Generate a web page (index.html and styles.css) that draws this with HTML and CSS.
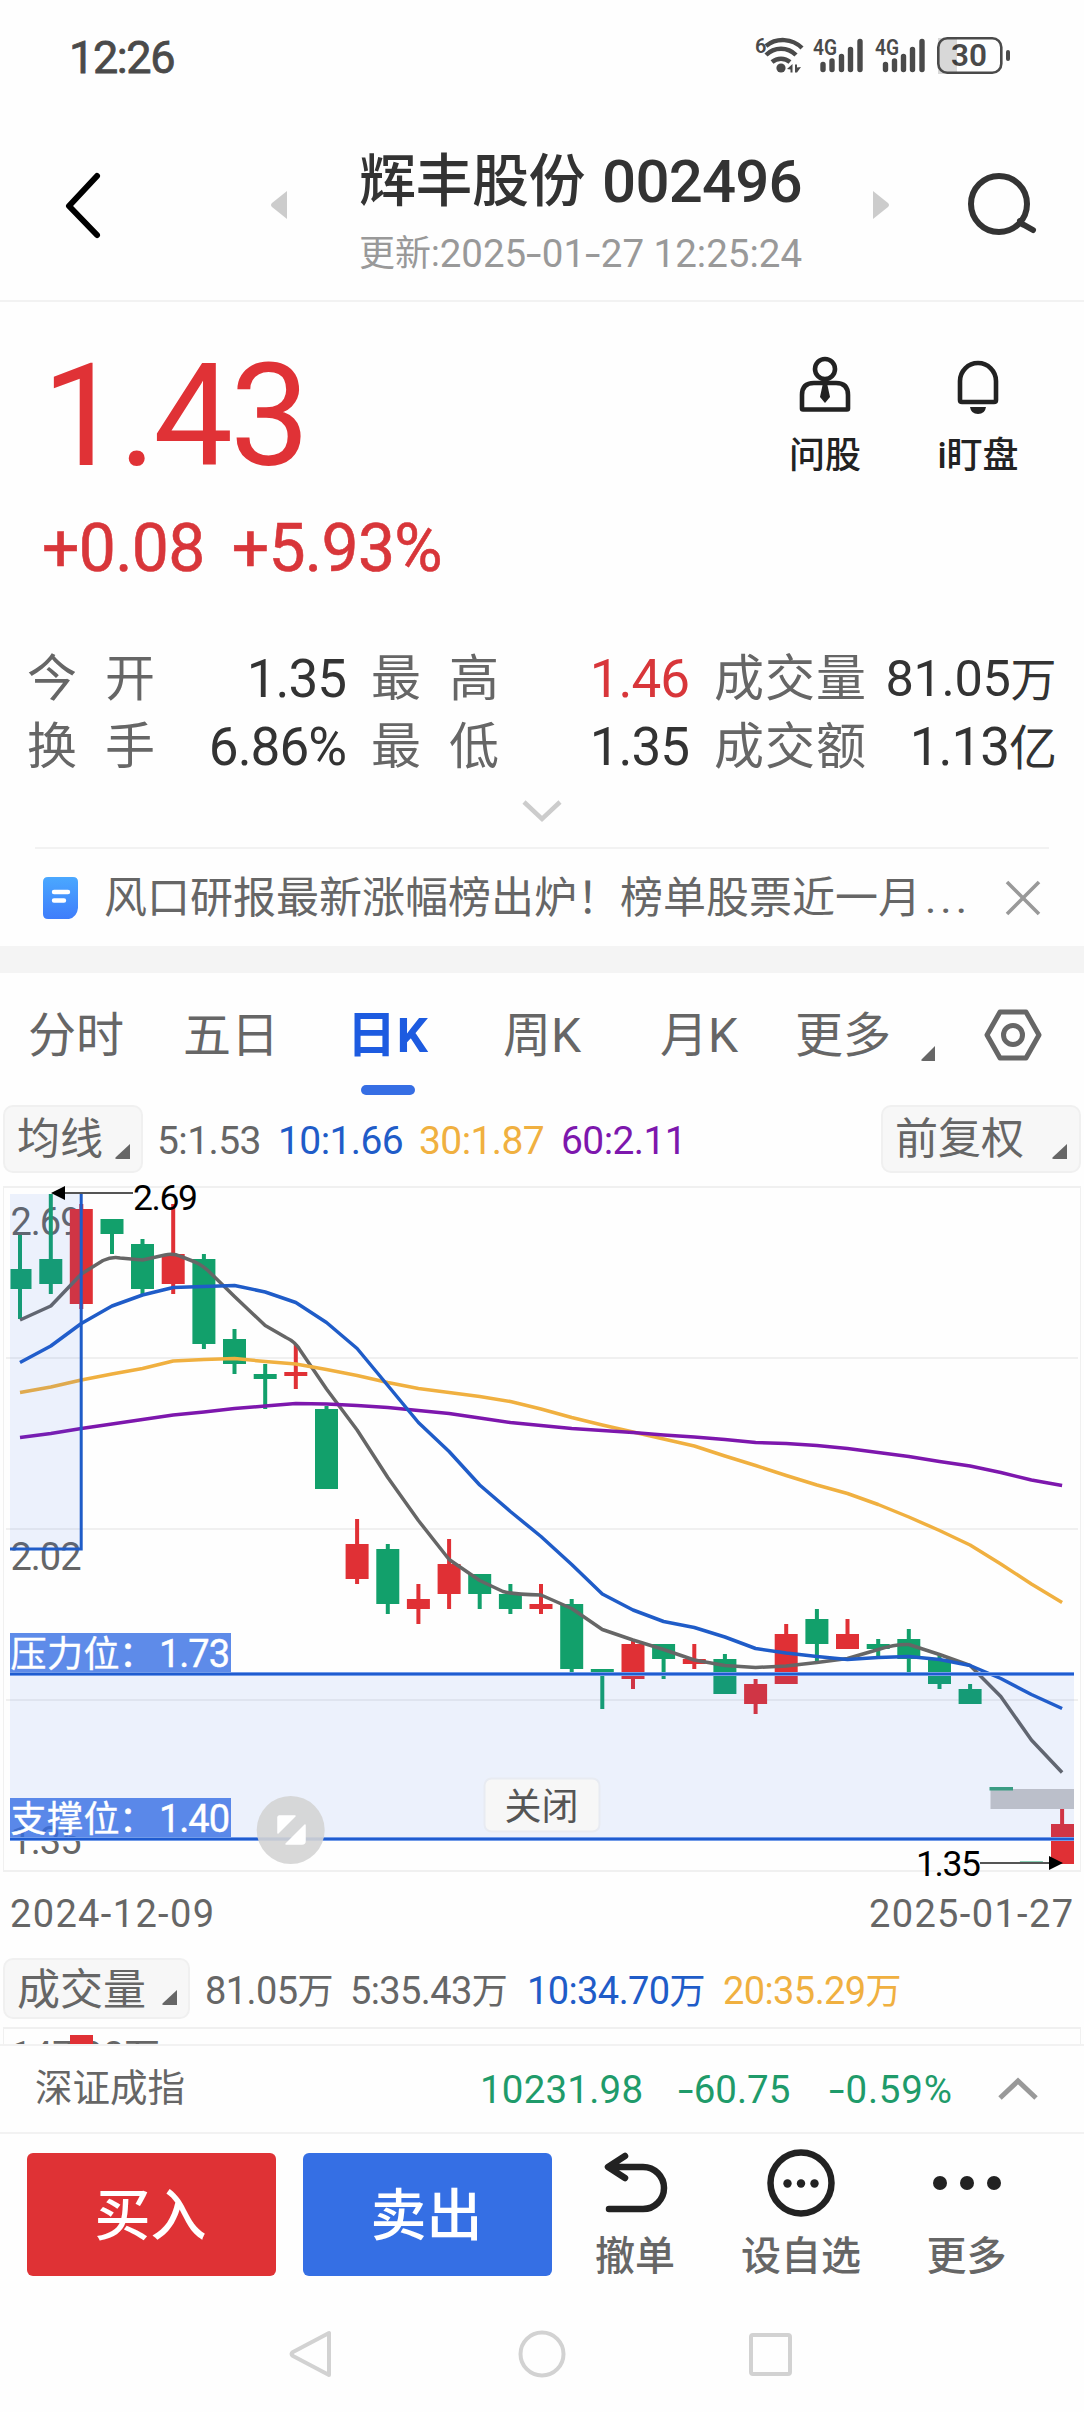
FILE: index.html
```html
<!DOCTYPE html>
<html lang="zh-CN">
<head>
<meta charset="utf-8">
<title>辉丰股份 002496</title>
<link rel="stylesheet" href="styles.css">
</head>
<body>
<div class="status">
  <span class="clock">12:26</span>
  <svg class="status-icons" width="280" height="70" viewBox="0 0 280 70">
    <g fill="none" stroke="#4a4a4a" stroke-width="4.4">
      <path d="M22 26a27 27 0 0 1 36 2M22 35a21 21 0 0 1 30 0M28 42a14 14 0 0 1 18 0"/>
    </g>
    <g fill="#4a4a4a">
      <circle cx="37" cy="48" r="4.6"/>
      <path d="M48.500 44v8.500h-2v-3l-3.500-.5zM51 44.500h2v3l4-.5-4 5.500h-2z"/>
      <text x="11" y="33" font-size="20" font-weight="600">6</text>
      <text x="69" y="35" font-size="22" font-weight="600" textLength="24" lengthAdjust="spacingAndGlyphs">4G</text>
      <text x="131" y="35" font-size="22" font-weight="600" textLength="24" lengthAdjust="spacingAndGlyphs">4G</text>
      <text x="207" y="46" font-size="31" font-weight="600" textLength="36" lengthAdjust="spacingAndGlyphs">30</text>
    </g>
    <path d="M194 18h19v36h-19z" fill="#000" opacity=".15"/>
    <g stroke="#4a4a4a" stroke-width="5.400" stroke-linecap="round">
      <path d="M79 44.500v5M88 41v8.500M97.500 36.500v13M106.500 29.500v20M116 21.500v28"/>
      <path d="M141.500 44.500v5M150.500 41v8.500M159.500 36.500v13M168.500 29.500v20M178 21.500v28"/>
    </g>
    <rect x="194.300" y="18.300" width="63" height="34.400" rx="9" fill="none" stroke="#4a4a4a" stroke-width="2.600"/>
    <rect x="262" y="30" width="4" height="11" rx="2" fill="#4a4a4a"/>
  </svg>
</div>

<header class="header">
  <svg class="back" width="40" height="70" viewBox="0 0 40 70"><path d="M35 5L7 35l28 29" fill="none" stroke="#000" stroke-width="6" stroke-linecap="round" stroke-linejoin="round"/></svg>
  <svg class="prev" width="16" height="28" viewBox="0 0 16 28"><path d="M16 0v28L1 16q-2-2 0-4z" fill="#ccc"/></svg>
  <div class="title-box">
    <h1 class="title">辉丰股份<span class="code">002496</span></h1>
    <div class="updated">更新:<span class="updated-time">2025<b class="dash">-</b>01<b class="dash">-</b>27 12:25:24</span></div>
  </div>
  <svg class="next" width="16" height="28" viewBox="0 0 16 28"><path d="M0 0v28l15-12q2-2 0-4z" fill="#ccc"/></svg>
  <svg class="search" width="72" height="66" viewBox="0 0 72 66"><circle cx="32" cy="33" r="28" fill="none" stroke="#333" stroke-width="6"/><path d="M53 50q2 4 4 4l9 5" fill="none" stroke="#333" stroke-width="6" stroke-linecap="round"/></svg>
</header>

<section class="quote">
  <div class="price-box">
    <div class="price">1.43</div>
    <div class="change"><span>+0.08</span><span>+5.93%</span></div>
  </div>
  <div class="tool ask">
    <svg width="56" height="60" viewBox="0 0 56 60" fill="none" stroke="#222" stroke-width="4.600">
      <circle cx="28" cy="14" r="10"/>
      <path d="M5 53.500V40q0-12 12-12h22q12 0 12 12v13.500q0 1-1 1H6q-1 0-1-1z" stroke-linejoin="round"/>
      <path d="M26 28h4l3 14-5 6-5-6z" fill="#222" stroke="none"/>
    </svg>
    <span>问股</span>
  </div>
  <div class="tool watch">
    <svg width="56" height="60" viewBox="0 0 56 60" fill="none" stroke="#222" stroke-width="4.600">
      <path d="M10 45V26a18 18 0 0 1 36 0v19q0 2-2 2H12q-2 0-2-2z"/>
      <path d="M20 52h16q-1 7-8 7t-8-7z" fill="#222" stroke="none"/>
    </svg>
    <span>i盯盘</span>
  </div>
</section>

<section class="stats">
  <span class="k"><i>今</i><i>开</i></span><span class="v">1.35</span>
  <span class="k"><i>最</i><i>高</i></span><span class="v up">1.46</span>
  <span class="k"><i>成</i><i>交</i><i>量</i></span><span class="v small">81.05<b>万</b></span>
  <span class="k"><i>换</i><i>手</i></span><span class="v">6.86%</span>
  <span class="k"><i>最</i><i>低</i></span><span class="v">1.35</span>
  <span class="k"><i>成</i><i>交</i><i>额</i></span><span class="v">1.13<b>亿</b></span>
</section>
<svg class="expand" width="44" height="28" viewBox="0 0 44 28"><path d="M4 4l18 17L40 4" fill="none" stroke="#ccc" stroke-width="4.500"/></svg>

<section class="notice">
  <svg width="35" height="42" viewBox="0 0 35 42">
    <defs><linearGradient id="doc" x1="0" y1="0" x2="0" y2="1"><stop offset="0" stop-color="#4aa8ff"/><stop offset="1" stop-color="#3f7dfb"/></linearGradient></defs>
    <path d="M5 0h25q5 0 5 5v26q-1 9-9 11H5q-5 0-5-5V5q0-5 5-5z" fill="url(#doc)"/>
    <path d="M11 15h14M11 23.500h10" stroke="#fff" stroke-width="4.400" stroke-linecap="round"/>
  </svg>
  <span class="notice-text">风口研报最新涨幅榜出炉！榜单股票近一月<b class="more">...</b></span>
  <svg class="close" width="36" height="36" viewBox="0 0 36 36"><path d="M2 2l32 32M34 2L2 34" stroke="#999" stroke-width="3.600"/></svg>
</section>
<div class="band"></div>

<nav class="tabs">
  <span class="tab t1">分时</span>
  <span class="tab t2">五日</span>
  <span class="tab t3 active">日K</span>
  <span class="tab t4">周K</span>
  <span class="tab t5">月K</span>
  <span class="tab t6">更多</span>
  <svg class="tri tab-tri" width="15" height="15" viewBox="0 0 15 15"><path d="M14 0v15H2q-3 0-1-2z"/></svg>
  <svg class="gear" width="60" height="56" viewBox="0 0 60 56" fill="none" stroke="#666" stroke-width="5" stroke-linejoin="round"><path d="M17 5h26l13 23-13 23H17L4 28z"/><circle cx="30" cy="28" r="9.500"/></svg>
</nav>

<div class="legend">
  <span class="pill ma">均线<svg class="tri" width="15" height="15" viewBox="0 0 15 15"><path d="M15 0v15H2q-3 0-1-2z"/></svg></span>
  <span class="val w1">5:1.53</span><span class="val w2 blue">10:1.66</span><span class="val w3 gold">30:1.87</span><span class="val purple">60:2.11</span>
  <span class="pill adj">前复权<svg class="tri" width="15" height="15" viewBox="0 0 15 15"><path d="M15 0v15H2q-3 0-1-2z"/></svg></span>
</div>

<div class="chart">
<svg width="1084" height="770" viewBox="0 1180 1084 770">
  <g stroke="#f0f0f0" stroke-width="2" fill="none">
    <path d="M3 1187H1081M6 1358H1078M6 1529H1078M6 1700H1078M3 1871H1081"/>
    <path d="M3.500 1187V1871M1080.500 1187V1871" stroke-width="1"/>
  </g>
  <g fill="#666" font-size="38">
    <text x="10.500" y="1235" textLength="71">2.69</text>
    <text x="10.500" y="1570" textLength="71">2.02</text>
    <text x="10.500" y="1854" textLength="71">1.35</text>
  </g>
  <g fill="none">
    <g stroke="#12a06b">
      <path stroke-width="4" d="M20 1235V1319M50.800 1194V1294M112 1219V1254M142.500 1239V1295M203.900 1254V1349M234.500 1329V1374M265.200 1364V1409M326.500 1406V1489M387.800 1544V1614M479.700 1574V1609M510.400 1584V1614M571.700 1599V1674M602.300 1669V1709M663.600 1644V1679M724.900 1654V1694M816.900 1609V1662M878.200 1639V1657M908.800 1629V1674M939.500 1654V1689M970.100 1684V1704"/>
      <path stroke-width="23" d="M50.800 1259V1284M112 1219V1234M142.500 1244V1289M203.900 1259V1344M234.500 1339V1364M265.200 1374V1379M326.500 1409V1489M387.800 1549V1604M479.700 1574V1594M510.400 1594V1609M571.700 1604V1669M602.300 1669V1674M663.600 1644V1659M724.900 1659V1694M816.900 1619V1644M878.200 1644V1649M908.800 1639V1659M939.500 1659V1684M970.100 1689V1704M1031.400 1861.500V1864"/>
      <path stroke-width="21" d="M21 1269V1289"/>
    </g>
    <g stroke="#e03035">
      <path stroke-width="4" d="M81.300 1204V1309M173.200 1204V1294M295.800 1344V1389M357.100 1519V1584M418.400 1584V1624M449.100 1539V1609M541 1584V1614M633 1640V1689M694.300 1644V1669M755.600 1679V1714M786.200 1624V1684M847.500 1619V1649M1062.100 1809V1864"/>
      <path stroke-width="23" d="M81.300 1209V1304M173.200 1254V1284M295.800 1372V1376M357.100 1544V1579M418.400 1599V1609M449.100 1564V1594M541 1604V1609M633 1644V1679M694.300 1659V1664M755.600 1684V1704M786.200 1634V1684M847.500 1634V1649M1062.500 1824V1864"/>
    </g>
  </g>
  <g fill="none" stroke-width="3.500" stroke-linejoin="round">
    <path stroke="#666" d="M20 1320L50.800 1306 81.300 1274 103 1260.500Q112 1256.500 120 1258L142.500 1260 165 1255Q173.200 1253 181 1256.500L195 1262Q203.900 1266 211 1273.500L234.500 1296.500 265.200 1325.500 286 1337.500Q296 1342 301 1351.500L326.500 1389 357.100 1430 387.800 1477.500 418.400 1520.500 449.100 1559.500 479.700 1580.500 503 1591.500Q510.400 1594 541 1595L571.700 1608.500 602.300 1629.500 633 1640 663.600 1649.500 694.300 1660 724.900 1665.500 755.600 1667.500 786.200 1666 816.900 1662.500 847.500 1658.500 878.200 1649.500Q895 1644 908.800 1644.500L939.500 1654.500 970.100 1665.500 1000.800 1696.500 1031.400 1740 1062.100 1772.500"/>
    <path stroke="#f0b040" d="M20 1392.500L50.800 1387 81.300 1380 112 1374 142.500 1368.500 173.200 1361 203.900 1359.500 234.500 1358.500 265.200 1361.500 295.800 1364 326.500 1369.500 357.100 1375.500 387.800 1382.500 418.400 1388.500 449.100 1392.500 479.700 1396.500 510.400 1401.500 541 1409 571.700 1417.500 602.300 1425 633 1432 663.600 1439 694.300 1446 724.900 1456 755.600 1465.500 786.200 1475.500 816.900 1485 847.500 1493.500 878.200 1504.500 908.800 1517 939.500 1530.500 970.100 1545 1000.800 1564 1031.400 1584 1062.100 1602.500"/>
    <path stroke="#7d17ad" d="M20 1437.500L50.800 1433.500 81.300 1428.500 112 1424 142.500 1419.500 173.200 1415 203.900 1412 234.500 1408.500 265.200 1406 295.800 1403.500 326.500 1404 357.100 1405.500 387.800 1407.500 418.400 1410.500 449.100 1413.500 479.700 1418 510.400 1422.500 541 1425.500 571.700 1428.500 602.300 1430.500 633 1432.500 663.600 1435 694.300 1437 724.900 1439.500 755.600 1442.500 786.200 1443.500 816.900 1445.500 847.500 1448.500 878.200 1452.500 908.800 1456.500 939.500 1461.500 970.100 1466 1000.800 1472.500 1031.400 1480 1062.100 1485.500"/>
    <path stroke="#1f5cc8" d="M20 1362.500L50.800 1346 81.300 1323.500 112 1306 142.500 1295 173.200 1287.500 203.900 1286.500 234.500 1285.500 265.200 1292 295.800 1302.500 326.500 1322.500 357.100 1348.500 387.800 1385.500 418.400 1422.500 449.100 1451.500 479.700 1485 510.400 1511.500 541 1536.500 571.700 1564.500 602.300 1594 633 1610 663.600 1621.500 694.300 1627.500 724.900 1637 755.600 1648.500 786.200 1653 816.900 1656.500 847.500 1659.500 878.200 1657.500 908.800 1656.500 939.500 1659.500 970.100 1665.500 1000.800 1678.500 1031.400 1694.500 1062.100 1708.500"/>
  </g>
  <path d="M10 1194H81V1549H10zM10 1674H1074V1838H10z" fill="#366ee4" opacity=".09"/>
  <path d="M990.500 1789H1074V1809H990.500z" fill="#bbbfca"/>
  <path d="M989.500 1787H1013V1790.500H989.500z" fill="#3a9c83"/>
  <path d="M81.200 1194V1549H10" fill="none" stroke="#1f5cc8" stroke-width="3"/>
  <g fill="#366ee4" opacity=".8"><path d="M10 1633H231V1673H10zM10 1798H231V1838H10z"/></g>
  <path d="M10 1674H1074M10 1839H1074" stroke="#8fb0f0" stroke-width="4"/>
  <path d="M10 1674H1074M10 1839H1074" stroke="#1f5cd0" stroke-width="2.400"/>
  <g fill="#fff" font-size="36" stroke="#fff" stroke-width=".4">
    <text x="10.500" y="1667" textLength="109">压力位</text><text x="119" y="1667">：</text><text x="159" y="1667" font-size="38" textLength="71">1.73</text>
    <text x="10.500" y="1832" textLength="109">支撑位</text><text x="119" y="1832">：</text><text x="159" y="1832" font-size="38" textLength="71">1.40</text>
  </g>
  <g fill="#000" font-size="35.500">
    <text x="133" y="1210" textLength="65">2.69</text>
    <text x="916" y="1876" textLength="65">1.35</text>
    <path d="M62 1193H133M980 1863H1050" stroke="#555" stroke-width="2"/>
    <path d="M51 1193l14-7v14zM1063 1863l-14-7v14z"/>
  </g>
  <g fill="#666" font-size="38">
    <text x="10" y="1927" textLength="204">2024-12-09</text>
    <text x="869" y="1927" textLength="204">2025-01-27</text>
  </g>
  <circle cx="290.700" cy="1830" r="34" fill="#d4d4d4" opacity=".9"/>
  <path d="M279 1816h16l-17 17v-16zM305 1825v16q0 3-3 3h-16z" fill="#fff" stroke="#fff" stroke-width="1.500" stroke-linejoin="round"/>
  <rect x="484.500" y="1778.500" width="115" height="53" rx="7" fill="#f7f7f7" stroke="#e8ebf2" stroke-width="2"/>
  <text x="541.500" y="1820" text-anchor="middle" font-size="37" fill="#555">关闭</text>
</svg>
</div>

<div class="legend volume">
  <span class="pill vol">成交量<svg class="tri" width="15" height="15" viewBox="0 0 15 15"><path d="M15 0v15H2q-3 0-1-2z"/></svg></span>
  <span class="val v1">81.05<b>万</b></span><span class="val v2">5:35.43<b>万</b></span><span class="val v3 blue">10:34.70<b>万</b></span><span class="val gold">20:35.29<b>万</b></span>
</div>
<svg class="vol-chart" width="1084" height="17" viewBox="0 2027 1084 17">
  <path d="M3 2028H1081" stroke="#f0f0f0" stroke-width="2"/>
  <path d="M3.500 2028V2045M1080.500 2028V2045" stroke="#f0f0f0"/>
  <text x="11" y="2067" font-size="37" fill="#666" textLength="113">147.98</text>
  <text x="124" y="2069" font-size="36" fill="#666">万</text>
  <path d="M70 2035H93V2045H70z" fill="#e03035"/>
</svg>

<section class="index-bar">
  <span class="index-name">深证成指</span>
  <span class="n1">10231.98</span><span class="n2"><b class="dash">-</b>60.75</span><span class="n3"><b class="dash">-</b>0.59%</span>
  <svg width="40" height="24" viewBox="0 0 40 24"><path d="M2 21L20 4l18 17" fill="none" stroke="#999" stroke-width="5"/></svg>
</section>

<section class="actions">
  <button class="btn buy">买入</button>
  <button class="btn sell">卖出</button>
  <div class="act a1">
    <svg width="68" height="68" viewBox="0 0 68 68" fill="none" stroke="#222" stroke-width="6.500" stroke-linecap="round" stroke-linejoin="round"><path d="M24 7L7 18l17 11M8 18h34a20.500 20.500 0 0 1 0 42H8"/></svg>
    <span>撤单</span>
  </div>
  <div class="act a2">
    <svg width="68" height="68" viewBox="0 0 68 68"><circle cx="34" cy="34" r="30.500" fill="none" stroke="#222" stroke-width="6.500"/><g fill="#222"><circle cx="20.500" cy="34.500" r="4.200"/><circle cx="34" cy="34.500" r="4.200"/><circle cx="47.500" cy="34.500" r="4.200"/></g></svg>
    <span>设自选</span>
  </div>
  <div class="act a3">
    <svg width="70" height="68" viewBox="0 0 70 68" fill="#222"><circle cx="8" cy="34" r="7"/><circle cx="35" cy="34" r="7"/><circle cx="62" cy="34" r="7"/></svg>
    <span>更多</span>
  </div>
</section>

<footer class="navbar">
  <svg width="1084" height="60" viewBox="0 0 1084 60" fill="none" stroke="#d2d2d2" stroke-width="4" stroke-linejoin="round"><path d="M329 9v42L293 32q-3-2 0-4z"/><circle cx="542" cy="30" r="21.500"/><rect x="751" y="11" width="39" height="39" rx="2"/></svg>
</footer>
</body>
</html>
```

FILE: styles.css
```css
* { box-sizing: border-box; }
body {
  margin: 0;
  width: 1084px;
  background: #fefefe;
  color: #666;
  font-family: Roboto, "Noto Sans CJK SC", sans-serif;
}
svg { display: block; flex: none; }
i, b { font-style: normal; font-weight: inherit; }
span { white-space: nowrap; }
.dash { display: inline-block; margin-right: 5px; transform: scaleX(1.45); transform-origin: left; }

.status { display: flex; height: 100px; padding: 20px 60px 0 69px; justify-content: space-between; color: #4a4a4a; }
.clock { font-size: 45px; line-height: 76px; letter-spacing: -1.4px; -webkit-text-stroke: .8px; }

.header { display: flex; height: 202px; border-bottom: 2px solid #f2f2f2; }
.back { margin: 71px 0 0 62px; }
.prev { margin: 91px 0 0 169px; }
.title-box { width: 445px; margin: 46px 0 0 71px; }
.title { display: flex; justify-content: center; margin: 0; font-size: 57px; line-height: 72px; font-weight: 500; color: #333; letter-spacing: -.5px; }
.code { margin-left: 17px; font-size: 60px; letter-spacing: -.8px; }
.updated { display: flex; justify-content: center; margin-top: 2px; font-size: 36px; line-height: 68px; color: #999; }
.updated-time { font-size: 38.500px; }
.next { margin: 91px 0 0 70px; }
.search { margin: 71px 0 0 78px; }

.quote { display: flex; height: 318px; }
.price-box { width: 783px; padding: 37px 0 0 42px; color: #e03236; }
.price { height: 156px; font-size: 142px; line-height: 156px; letter-spacing: -3px; }
.change { display: flex; gap: 27px; margin-top: 18px; font-size: 66px; line-height: 72px; letter-spacing: -.7px; -webkit-text-stroke: .6px; color: #d8363a; }
.tool { display: flex; flex-direction: column; align-items: center; width: 84px; padding-top: 53px; font-size: 36px; line-height: 48px; font-weight: 500; color: #222; }
.tool span { margin-top: 17px; }
.watch { margin-left: 69px; }

.stats {
  display: grid;
  grid-template-columns: 128px 191px 25px 128px 190px 25px 152px 190px;
  grid-auto-rows: 68px;
  padding: 25px 0 0 27px;
  height: 160px;
  font-size: 50px;
  line-height: 68px;
}
.k { display: flex; justify-content: space-between; }
.stats > :nth-child(6n+1) { grid-column: 1; }
.stats > :nth-child(6n+3) { grid-column: 4; }
.stats > :nth-child(6n+5) { grid-column: 7; }
.v { text-align: right; font-size: 53px; letter-spacing: -1px; color: #333; }
.v b { font-size: 48px; }
.v.small { font-size: 50.500px; letter-spacing: -.4px; }
.v.small b { font-size: 46px; }
.up { color: #d8363a; }
.expand { margin: 18px auto 0; }

.notice { display: flex; align-items: center; height: 99px; margin: 21px 35px 0; padding: 0 8px; border-top: 2px solid #f2f2f2; }
.notice-text { width: 903px; margin: 0 0 0 26px; font-size: 43px; line-height: 60px; }
.more { margin-left: 4px; letter-spacing: 4px; }
.band { height: 27px; background: #f4f4f4; }

.tabs { display: flex; height: 125px; font-size: 48px; line-height: 125px; }
.tab { flex: none; position: relative; }
.t1 { margin-left: 28px; width: 155px; }
.t2 { width: 164px; }
.t3 { width: 156px; }
.t4 { width: 157px; }
.t5 { width: 135px; }
.t6 { width: 126px; }
.active { color: #1d5be0; font-weight: 700; font-size: 49px; letter-spacing: .8px; }
.active::after { content: ""; position: absolute; left: 14px; top: 112px; width: 54px; height: 10px; border-radius: 5px; background: #366ee4; }
.tri { fill: #666; }
.tab-tri { margin-top: 73px; }
.gear { margin: 34px 0 0 47px; }

.legend { display: flex; align-items: center; height: 82px; padding: 0 3px; font-size: 39px; letter-spacing: -.6px; }
.val { margin-top: 3px; }
.pill { display: flex; justify-content: space-between; align-items: flex-end; height: 68px; border: 2px solid #f0f0f0; border-radius: 10px; background: #f7f7f7; font-size: 43px; line-height: 63px; letter-spacing: 0; }
.pill .tri { margin-bottom: 12px; }
.ma { width: 140px; padding: 0 11px 0 12px; margin-right: 14px; }
.adj { width: 200px; padding: 0 12px 0 12px; margin-left: auto; }
.w1 { width: 121px; }
.w2 { width: 141px; }
.w3 { width: 142px; }
.blue { color: #1f5cc8; }
.gold { color: #f0b040; }
.purple { color: #7d17ad; }

.chart { height: 770px; }

.volume { height: 77px; }
.volume .pill { height: 61px; line-height: 53px; }
.vol { width: 187px; padding: 0 11px 0 12px; margin-right: 15px; }
.volume .val { margin-top: -2px; font-size: 38px; letter-spacing: -.6px; }
.volume b { font-size: 36px; }
.v1 { width: 145px; }
.v2 { width: 177px; }
.v3 { width: 196px; }

.index-bar { display: flex; align-items: center; height: 90px; border-top: 2px solid #f2f2f2; border-bottom: 2px solid #f2f2f2; padding-left: 35px; font-size: 38.500px; line-height: 60px; color: #1f9b6a; }
.index-bar span { padding-top: 1px; }
.index-bar .index-name { width: 445px; padding: 0 0 3px; font-size: 37.500px; color: #666; }
.n1 { width: 198px; letter-spacing: .2px; }
.n2 { width: 151px; }
.n3 { width: 169px; letter-spacing: .8px; }

.actions { display: flex; height: 160px; padding: 19px 0 0 27px; }
.btn { width: 249px; height: 123px; margin-right: 27px; padding: 3px 2px 0 0; border: 0; border-radius: 6px; font: 500 56px/120px Roboto, "Noto Sans CJK SC", sans-serif; color: #fff; background: #df3235; }
.sell { background: #356fe4; }
.act { display: flex; flex-direction: column; align-items: center; margin-top: -4px; font-size: 40px; line-height: 60px; font-weight: 500; color: #666; }
.act span { margin-top: 10px; }
.a1 { width: 112px; }
.a2 { width: 220px; }
.a3 { width: 111px; }

.navbar { padding-top: 30px; }
```
